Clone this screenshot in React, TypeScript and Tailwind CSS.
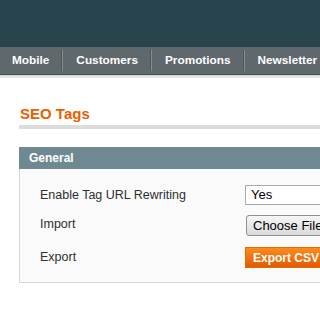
import React from "react";

const navItems = ["Mobile", "Customers", "Promotions", "Newsletter"];

const App: React.FC = () => {
  return (
    <div
      className="w-[320px] h-[320px] overflow-hidden bg-white"
      style={{ fontFamily: '"Liberation Sans", Arial, sans-serif' }}
    >
      {/* header */}
      <div className="h-[47px] bg-[#27434c]" />

      {/* nav */}
      <div className="h-[28px] bg-[#5f686d] border-b border-[#474e52] flex items-stretch whitespace-nowrap">
        {navItems.map((item, i) => (
          <div key={item} className="flex items-stretch shrink-0">
            {i > 0 && (
              <div className="flex py-[3px]">
                <div className="w-px bg-[#4e565a]" />
                <div className="w-px bg-[#868d91]" />
              </div>
            )}
            <div
              className={`flex items-center text-[11.8px] font-bold text-white ${
                i === 0 ? "pl-[12px] pr-[12px]" : "pl-[13px] pr-[12px]"
              }`}
            >
              {item}
            </div>
          </div>
        ))}
      </div>
      <div className="h-[3px] bg-gradient-to-b from-[#cfd2d3] to-[#eef0f0]" />

      {/* content */}
      <div className="pl-[19px] pt-[27px] w-[420px]">
        <h3 className="pl-px text-[15px] leading-[17px] font-bold text-[#eb5e00]">
          SEO Tags
        </h3>
        <div className="mt-[3px] h-[4px] bg-[#dcdcdc]" />

        <div className="mt-[18px]">
          <div className="h-[22px] bg-[#6f8992] flex items-center pl-[10px] text-[12px] font-bold text-white">
            General
          </div>
          <div className="bg-[#fafafa] border border-t-0 border-[#d6d6d6] pl-[20px] pt-[16px] pb-[14px] text-[12.5px] text-[#2f2f2f]">
            <div className="flex items-center h-[20px]">
              <div className="w-[205px] shrink-0">Enable Tag URL Rewriting</div>
              <div className="h-[20px] w-[120px] shrink-0 border border-[#aaaaaa] bg-white flex items-center pl-[5px] text-[13px] text-black">
                Yes
              </div>
            </div>
            <div className="flex items-center h-[21px] mt-[10px]">
              <div className="w-[206px] shrink-0 -mt-[3px]">Import</div>
              <div className="h-[21px] w-[120px] shrink-0 rounded-[3px] border border-[#8f8f8f] bg-gradient-to-b from-[#f6f6f6] to-[#dadada] flex items-center pl-[6px] text-[13px] text-black">
                Choose File
              </div>
            </div>
            <div className="flex items-center h-[21px] mt-[11px]">
              <div className="w-[205px] shrink-0">Export</div>
              <div className="h-[21px] w-[120px] shrink-0 border border-[#e06b00] bg-gradient-to-b from-[#fb8c1c] to-[#e25900] flex items-center pl-[7px] text-[12px] font-bold text-white">
                Export CSV
              </div>
            </div>
          </div>
        </div>
      </div>
    </div>
  );
};

export default App;
